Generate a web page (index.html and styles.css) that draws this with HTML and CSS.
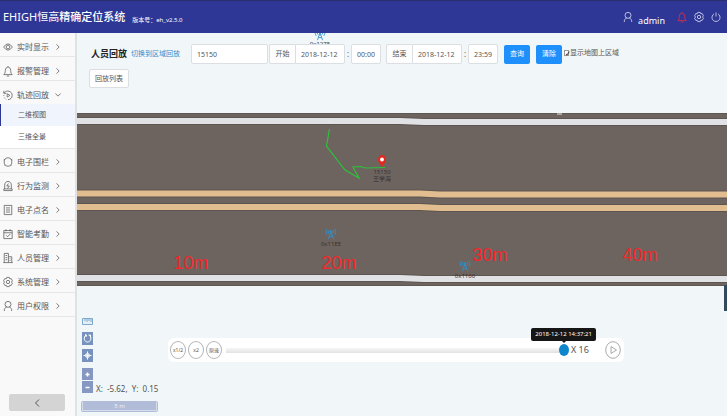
FILE: index.html
```html
<!DOCTYPE html>
<html lang="zh-CN">
<head>
<meta charset="utf-8">
<title>EHIGH恒高精确定位系统</title>
<link rel="stylesheet" href="styles.css">
</head>
<body>
<svg class="defs" aria-hidden="true">
  <symbol id="chev" viewBox="0 0 8 10"><path d="M2 1.500 5.500 5 2 8.500"/></symbol>
  <symbol id="user" viewBox="0 0 12 14"><circle cx="6" cy="5" r="3.600"/><path d="M1.500 13c0-3 1.500-4.500 3-5M10.500 13c0-3-1.500-4.500-3-5"/></symbol>
  <symbol id="bell" viewBox="0 0 12 14"><path d="M6 1v1M1 11.300h10c-1.500-1.300-1.600-2.500-1.800-5C9 4 8 2.300 6 2.300S3 4 2.800 6.300c-.2 2.500-.3 3.700-1.800 5zM4.500 13h3"/></symbol>
  <symbol id="gear" viewBox="0 0 12 14"><path d="M4.500 1.500h3l.6 1.600 1.700-.2 1.500 2.600L10.200 7l1.100 1.500-1.500 2.600-1.700-.2-.6 1.600h-3l-.6-1.600-1.700.2L.7 8.500 1.800 7 .7 5.500l1.500-2.600 1.700.2z"/><circle cx="6" cy="7" r="2"/></symbol>
  <symbol id="antenna" viewBox="0 0 14 14"><path d="M4 13 7 4l3 9M5 10h4M6 7h2M4.500 2.500Q3 4.500 4.500 6.500M9.500 2.500q1.500 2 0 4M2.500 1Q-.3 4.500 2.500 8M11.500 1q2.800 3.500 0 7"/><circle cx="7" cy="4" r="1"/></symbol>
</svg>

<header class="topbar">
  <h1 class="brand">EHIGH恒高<b>精确定位系统</b></h1>
  <span class="version">版本号：eh_v2.5.0</span>
  <div class="account">
    <svg class="icon"><use href="#user"/></svg>
    <span class="name">admin</span>
    <button class="bare alarm" aria-label="报警"><svg class="icon"><use href="#bell"/></svg></button>
    <button class="bare" aria-label="设置"><svg class="icon"><use href="#gear"/></svg></button>
    <button class="bare" aria-label="退出"><svg class="icon" viewBox="0 0 12 14"><path d="M6 1.500v5M3.500 3.300C-.5 6 1 12.300 6 12.300S12.500 6 8.500 3.300"/></svg></button>
  </div>
</header>

<div class="shell">
  <nav class="sidebar">
    <a class="item" href="#"><svg class="icon" viewBox="0 0 12 14"><path d="M.7 7Q6-.5 11.300 7 6 14.500.7 7z"/><circle cx="6" cy="7" r="2.200"/></svg><span>实时显示</span><svg class="chev"><use href="#chev"/></svg></a>
    <a class="item" href="#"><svg class="icon"><use href="#bell"/></svg><span>报警管理</span><svg class="chev"><use href="#chev"/></svg></a>
    <a class="item open" href="#"><svg class="icon" viewBox="0 0 12 14"><path d="M1 2v3h3M1.500 4.500C4 .5 11 2 11 7.500 11 11 8.500 12.500 6 12.500M1 7v1M1.500 10l.5 1M3.300 12l.7.400M5 5.500v4L8.300 7.500z"/></svg><span>轨迹回放</span><svg class="chev down"><use href="#chev"/></svg></a>
    <div class="submenu">
      <a class="sub active" href="#">二维视图</a>
      <a class="sub" href="#">三维全景</a>
    </div>
    <a class="item" href="#"><svg class="icon" viewBox="0 0 12 14"><ellipse cx="6" cy="7" rx="4.600" ry="5"/><path d="M.8 4.500 2.500 4M11.200 4.500 9.500 4M2 11.500l1-1M10 11.500l-1-1"/></svg><span>电子围栏</span><svg class="chev"><use href="#chev"/></svg></a>
    <a class="item" href="#"><svg class="icon" viewBox="0 0 12 14"><path d="M2 10.500V6c0-6 8-6 8 0v4.500M1 10.500h10v2H1zM6.500 4 4.500 7h3l-2 3"/></svg><span>行为监测</span><svg class="chev"><use href="#chev"/></svg></a>
    <a class="item" href="#"><svg class="icon" viewBox="0 0 12 14"><path d="M1.500 1.500h9v11h-9zM3.500 4.500h5M3.500 7h5M3.500 9.500h5"/></svg><span>电子点名</span><svg class="chev"><use href="#chev"/></svg></a>
    <a class="item" href="#"><svg class="icon" viewBox="0 0 12 14"><path d="M1 2.800h10v9.700H1zM1 5.500h10M3.500 1.300v2.500M8.500 1.300v2.500M3.700 8.500 5.500 10.300 8.700 7"/></svg><span>智能考勤</span><svg class="chev"><use href="#chev"/></svg></a>
    <a class="item" href="#"><svg class="icon" viewBox="0 0 12 14"><path d="M.3 12.500h11.400M1.500 12.500v-11h5v11M6.500 5.500h4v7M3 4h2M3 6.500h2M3 9h2M8 8h1M8 10h1"/></svg><span>人员管理</span><svg class="chev"><use href="#chev"/></svg></a>
    <a class="item" href="#"><svg class="icon"><use href="#gear"/></svg><span>系统管理</span><svg class="chev"><use href="#chev"/></svg></a>
    <a class="item" href="#"><svg class="icon"><use href="#user"/></svg><span>用户权限</span><svg class="chev"><use href="#chev"/></svg></a>
    <button class="collapse" aria-label="收起菜单"><svg class="chev back"><use href="#chev"/></svg></button>
  </nav>

  <main class="stage">
    <svg class="map" viewBox="77 33 650 383" preserveAspectRatio="xMinYMin slice">
      <path class="asphalt" d="M77 113H727V286H77z"/>
      <path class="curb" d="M77 113.500H727M77 285.500H727"/>
      <g class="edge">
        <path d="M77 121H400L424 122H727M77 278H400L424 279H727"/>
      </g>
      <g class="white">
        <path d="M77 121H400L424 122H727M77 278H400L424 279H727"/>
      </g>
      <g class="edge">
        <path d="M77 193.500H420L440 194.500H727M77 207H420L440 208H727"/>
      </g>
      <g class="amber">
        <path d="M77 193.500H420L440 194.500H727M77 207H420L440 208H727"/>
      </g>
      <path class="speck" d="M328 122.500l4-2M557 114h5"/>
      <path class="vehicle" d="M724 285h3v26h-3z"/>
      <path class="trace" d="M329.500 129 326.500 146 345 170 359 178 353 167 361 166.500 365 168 385 167.500"/>
      <path class="pin" d="M382 167.500c-1-3-4-4.500-4-8a4 4.500 0 0 1 8 0c0 3.500-3 5-4 8z"/>
      <circle class="pin-hole" cx="382" cy="159.500" r="1.900"/>
      <g class="tag"><text x="382" y="174">15150</text><text x="382" y="181">王学海</text></g>
      <g class="tag">
        <text x="320" y="46">0x1275</text><text x="331" y="246">0x11EE</text><text x="465" y="278">0x1166</text>
      </g>
      <g class="beacon">
        <use href="#antenna" x="314" y="28" width="12" height="14"/>
        <use href="#antenna" x="325" y="227" width="12" height="14"/>
        <use href="#antenna" x="459" y="259" width="12" height="14"/>
      </g>
      <g class="metres">
        <text x="191" y="269">10m</text><text x="339" y="269">20m</text><text x="490" y="261">30m</text><text x="640" y="261">40m</text>
      </g>
    </svg>

    <form class="toolbar">
      <h2 class="title">人员回放</h2>
      <a class="switch" href="#">切换到区域回放</a>
      <input class="field who" aria-label="人员编号" value="15150">
      <div class="group"><label class="addon" for="d1">开始</label><input class="field date" id="d1" value="2018-12-12"></div>
      <span class="colon">:</span>
      <input class="field time" aria-label="开始时间" value="00:00">
      <div class="group end"><label class="addon" for="d2">结束</label><input class="field date" id="d2" value="2018-12-12"></div>
      <span class="colon">:</span>
      <input class="field time" aria-label="结束时间" value="23:59">
      <button class="primary" type="button">查询</button>
      <button class="primary" type="button">清除</button>
      <label class="check"><input type="checkbox" checked>显示地图上区域</label>
    </form>
    <button class="list">回放列表</button>

    <div class="tools">
      <button class="ruler" aria-label="测距"><svg viewBox="0 0 11 7"><path d="M.5.500h10v6H.5zM3 1v2M5 1v3M7 1v2M9 1v3"/></svg></button>
      <button class="tool" aria-label="旋转"><svg viewBox="0 0 11 13"><path d="M4 3.200C1 5 2 10 5.500 10S10 5 7.500 3.500M3 2.500l1.500.5-.5 2M8.500 5.500V3h-2"/></svg></button>
      <button class="tool" aria-label="定位"><svg viewBox="0 0 11 13"><circle cx="5.500" cy="6.500" r="2"/><circle class="dot" cx="5.500" cy="6.500" r="1"/><path d="M5.500 2.500v2M5.500 8.500v2M1.500 6.500h2M7.500 6.500h2"/></svg></button>
      <div class="zoomer">
        <button class="tool" aria-label="放大"><svg viewBox="0 0 11 13"><path class="thick" d="M3.500 6.500h4M5.500 4.500v4"/></svg></button>
        <button class="tool" aria-label="缩小"><svg viewBox="0 0 11 13"><path class="thick" d="M3.500 6.500h4"/></svg></button>
        <span class="coords">X:&nbsp; -5.62,&nbsp; Y:&nbsp; 0.15</span>
      </div>
      <div class="scale"><span>5 m</span></div>
    </div>

    <div class="player">
      <button class="round">x1/2</button>
      <button class="round">x2</button>
      <button class="round">原速</button>
      <div class="track">
        <input type="range" aria-label="回放进度" value="100">
        <output class="tip">2018-12-12 14:37:21</output>
      </div>
      <span class="speed">X 16</span>
      <button class="play" aria-label="播放"><svg viewBox="0 0 16 18"><ellipse cx="8" cy="9" rx="7.300" ry="8.300"/><path d="M6 5.500v7L11.500 9z"/></svg></button>
    </div>
  </main>
</div>
</body>
</html>
```
FILE: styles.css
```css
* { box-sizing: border-box; }

body {
  margin: 0;
  min-height: 100vh;
  display: flex;
  flex-direction: column;
  font: 8px/12px "Noto Sans", "Noto Sans CJK SC", sans-serif;
  color: #555;
  background: #f1f7f8;
}

button, input { font: inherit; color: inherit; margin: 0; padding: 0; }
button { border: 0; background: none; cursor: pointer; }
a { color: inherit; text-decoration: none; }
svg { display: block; fill: none; stroke: currentColor; }
.defs { position: absolute; width: 0; height: 0; }
.icon { width: 10px; height: 12px; flex: none; }

/* Top bar */
.topbar {
  display: flex;
  align-items: center;
  height: 33px;
  padding: 0 6px 0 3px;
  color: #fff;
  background: #2e3796;
  border-top: 1px solid #2a2e6c;
}
.brand { margin: 0; font-size: 11px; line-height: 16px; font-weight: 400; white-space: nowrap; }
.brand b { font-weight: 500; }
.version { margin: 6px 0 0 7px; font-size: 6px; }
.account { display: flex; align-items: center; gap: 7px; margin-left: auto; color: #d4d7ec; }
.name { margin: 7px 5px 0 -2px; font-size: 9px; color: #fff; }
.alarm { color: #e02c4a; }

/* Sidebar */
.shell { flex: 1; display: flex; }
.sidebar {
  flex: none;
  width: 77px;
  display: flex;
  flex-direction: column;
  background: #f9f9f9;
  border-right: 2px solid #e0e1e3;
}
.item {
  display: flex;
  align-items: center;
  height: 24px;
  padding: 4px 0 0 3px;
  border-bottom: 1px solid #e6e6e6;
}
.item span { width: 38px; margin-left: 4px; }
.item .icon { color: #666; }
.item.open { border-bottom: 0; height: 23px; }
.submenu ~ .item { padding-top: 3px; }
.chev { width: 6px; height: 8px; flex: none; }
.down { transform: rotate(90deg); }
.back { transform: rotate(180deg); width: 8px; height: 10px; }
.submenu { background: #fff; border-bottom: 1px solid #e6e6e6; }
.sub {
  display: flex;
  align-items: center;
  height: 22px;
  padding-left: 17px;
  font-size: 7px;
  border-left: 1px solid transparent;
}
.sub.active { background: #f0f4fd; border-left-color: #2e3796; }
.collapse {
  display: grid;
  place-items: center;
  height: 17px;
  margin: auto 10px 5px 9px;
  border-radius: 2px;
  background: #d4d4d4;
}

/* Map */
.stage { position: relative; flex: 1; min-width: 0; overflow: hidden; }
.map { position: absolute; inset: 0; width: 100%; height: 100%; stroke: none; }
.asphalt { fill: #6e645f; }
.curb { stroke: #5f5751; }
.edge { stroke: #5d5550; stroke-width: 8; }
.white { stroke: #e1e2e6; stroke-width: 6; }
.amber { stroke: #e1bd8f; stroke-width: 6; }
.speck { stroke: #e8eaec; }
.vehicle { fill: #334a5a; }
.trace { stroke: #2cc23a; stroke-width: 1.2; }
.pin { fill: #e02a20; }
.pin-hole { fill: #fff; }
.tag { fill: #38322f; font-size: 6px; text-anchor: middle; }
.beacon { stroke: #2f92cf; }
.metres { fill: #f3262a; font: 18px "Liberation Sans", sans-serif; text-anchor: middle; }

/* Query bar */
.toolbar {
  position: relative;
  display: flex;
  align-items: center;
  padding: 11px 0 0 14px;
  white-space: nowrap;
}
.title { margin: 0 4px 0 0; font-size: 9px; color: #222; }
.switch { width: 50px; font-size: 7px; color: #3b87cb; }
.field {
  height: 20px;
  border: 1px solid #dcdfe2;
  border-radius: 2px;
  background: #fff;
  padding: 0 5px;
  font-size: 7px;
}
.who { width: 77px; margin: 0 1px 0 10px; }
.group { display: flex; }
.group.end { margin-left: 5px; }
.addon {
  width: 26px;
  line-height: 18px;
  font-size: 7px;
  text-align: center;
  background: #fdfdfd;
  border: 1px solid #dcdfe2;
  border-right: 0;
  border-radius: 2px 0 0 2px;
}
.date { width: 50px; border-radius: 0 2px 2px 0; }
.colon { width: 6px; text-align: center; }
.time { width: 30px; }
.primary {
  width: 26px;
  height: 19px;
  margin-left: 6px;
  border-radius: 2px;
  background: #1f90fb;
  color: #fff;
  font-size: 7px;
}
.check { display: flex; align-items: center; gap: 1px; margin: -2px 0 0 2px; font-size: 7px; }
.check input {
  display: grid;
  place-items: center;
  width: 5px;
  height: 6px;
  appearance: none;
  border: 1px solid #999;
  background: #fff;
}
.check input:checked::before { content: "✓"; color: #111; font: bold 7px/6px "DejaVu Sans", sans-serif; }
.list {
  position: relative;
  display: block;
  height: 19px;
  margin: 5px 0 0 12px;
  padding: 0 5px;
  border: 1px solid #dcdfe2;
  border-radius: 2px;
  background: #fff;
  font-size: 7px;
}

/* Map controls */
.tools { position: absolute; left: 4px; bottom: 4px; display: grid; gap: 4px; }
.tools button { display: block; width: 11px; margin-left: 1px; color: #fff; }
.tools .ruler { height: 7px; margin-bottom: 3px; background: #e4eff6; color: #7fa9cc; }
.tool { height: 13px; background: #7793bd; }
.dot { fill: #fff; }
.zoomer { position: relative; display: grid; gap: 1px; margin: 2px 0 4px; }
.zoomer .tool { background: #8697c1; height: 12px; }
.thick { stroke-width: 1.5; }
.coords {
  position: absolute;
  left: 15px;
  bottom: -2px;
  font-size: 8px;
  white-space: nowrap;
}
.scale { width: 77px; padding: 1px; border-radius: 2px; background: #b0bcd8; color: #eef1f8; }
.scale span {
  display: block;
  border: 1px solid #d5dcec;
  border-top: 0;
  font-size: 6px;
  line-height: 8px;
  text-align: center;
}

/* Playback bar */
.player {
  position: absolute;
  left: 91px;
  right: 103px;
  bottom: 54px;
  display: flex;
  align-items: center;
  gap: 2px;
  height: 24px;
  padding: 0 3px 0 2px;
  border-radius: 6px;
  background: #fff;
}
.round {
  width: 16px;
  height: 18px;
  flex: none;
  border: 1px solid #b5b5b5;
  border-radius: 50%;
  font-size: 5px;
  line-height: 8px;
  white-space: nowrap;
}
.track { position: relative; flex: 1; display: flex; margin-left: 2px; }
.track input {
  width: 100%;
  height: 12px;
  appearance: none;
  background: linear-gradient(#f6f6f6, #e2e2e2) center / 100% 5px no-repeat;
}
.track input::-webkit-slider-thumb {
  appearance: none;
  width: 10px;
  height: 12px;
  border-radius: 50%;
  background: #0e86cb;
}
.tip {
  position: absolute;
  right: -27px;
  bottom: 15px;
  padding: 0 4px;
  border-radius: 2px;
  background: #161616;
  color: #fff;
  font-size: 6px;
  line-height: 13px;
  white-space: nowrap;
}
.tip::after {
  content: "";
  position: absolute;
  top: 100%;
  left: 50%;
  margin-left: -2px;
  border: 2px solid transparent;
  border-top-color: #161616;
}
.speed { width: 32px; font-size: 9px; white-space: nowrap; }
.play { width: 16px; height: 18px; color: #aaa; }
```
